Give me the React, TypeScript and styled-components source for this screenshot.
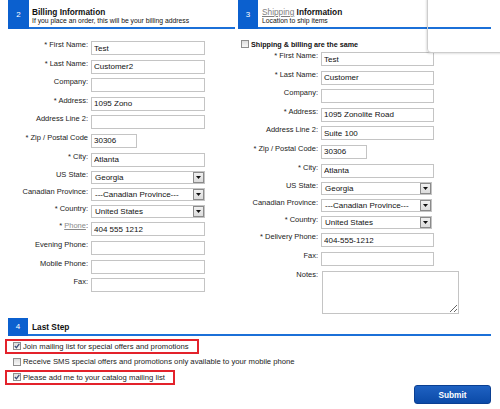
import React from "react";
import styled, { createGlobalStyle } from "styled-components";

const GlobalStyle = createGlobalStyle`
  html, body { margin: 0; padding: 0; background: #fff; }
  body { font-family: "Liberation Sans", Arial, sans-serif; color: #111; }
  * { box-sizing: border-box; }
`;

const BLUE = "#0b60cf";
const LINE = "#1b70d8";

const Page = styled.div`
  position: relative;
  width: 500px;
  height: 409px;
  overflow: hidden;
  padding: 0 9px 0 8px;
`;

const Columns = styled.div`
  display: flex;
  gap: 3px;
  align-items: flex-start;
`;

const Column = styled.section<{ $w: number }>`
  width: ${(p) => p.$w}px;
  flex: none;
`;

const SectionHeader = styled.div<{ $h: number }>`
  display: flex;
  height: ${(p) => p.$h}px;
`;

const StepNum = styled.div<{ $w: number }>`
  width: ${(p) => p.$w}px;
  flex: none;
  background: ${BLUE};
  color: #fff;
  font-size: 8px;
  display: flex;
  align-items: center;
  justify-content: center;
`;

const HeadText = styled.div<{ $pl: number; $pt: number }>`
  flex: 1;
  border-bottom: 2px solid ${LINE};
  padding: ${(p) => p.$pt}px 0 0 ${(p) => p.$pl}px;
`;

const Title = styled.div`
  font-size: 8.3px;
  line-height: 10px;
  font-weight: bold;
  color: #111;
  white-space: nowrap;
`;

const TitleLink = styled.span`
  font-weight: normal;
  color: #7d7d7d;
  text-decoration: underline;
`;

const Subtitle = styled.div`
  font-size: 6.8px;
  line-height: 8px;
  color: #111;
  white-space: nowrap;
`;

const FormGrid = styled.div<{ $mt: number }>`
  display: grid;
  grid-template-columns: 80px 1fr;
  column-gap: 3px;
  row-gap: 4.6px;
  align-items: start;
  margin-top: ${(p) => p.$mt}px;
`;

const Label = styled.label`
  font-size: 7.5px;
  line-height: 8px;
  text-align: right;
  white-space: nowrap;
  color: #222;
`;

const LabelLink = styled.span`
  color: #8a8a8a;
  text-decoration: underline;
`;

const TextInput = styled.input<{ $w: number }>`
  display: block;
  width: ${(p) => p.$w}px;
  height: 14px;
  margin: 0;
  padding: 0 2px;
  border: 1px solid #c4c4c4;
  background: #fff;
  font-family: "Liberation Sans", Arial, sans-serif;
  font-size: 8px;
  color: #111;
  outline: none;
`;

const SelectBox = styled.div<{ $w: number }>`
  display: flex;
  align-items: center;
  width: ${(p) => p.$w}px;
  height: 12.5px;
  border: 1px solid #c4c4c4;
  background: #fff;
  padding-left: 3px;
  font-size: 8px;
  color: #111;
  white-space: nowrap;
`;

const SelectArrow = styled.span`
  margin-left: auto;
  margin-right: 0;
  width: 11px;
  height: 100%;
  flex: none;
  border: 1px solid #8a8a8a;
  background: linear-gradient(#f0f0f0, #dcdcdc);
  display: flex;
  align-items: center;
  justify-content: center;
`;

const Notes = styled.textarea`
  display: block;
  width: 137px;
  height: 43px;
  margin: 0 0 0 1px;
  padding: 2px;
  border: 1px solid #c4c4c4;
  resize: both;
  font-family: "Liberation Sans", Arial, sans-serif;
  font-size: 8px;
  outline: none;
`;

const SameRow = styled.div`
  display: flex;
  align-items: center;
  gap: 2px;
  height: 10px;
  margin-top: 10px;
  padding-left: 3px;
  font-size: 7.2px;
  font-weight: bold;
  color: #111;
  white-space: nowrap;
`;

const Box = styled.span`
  width: 8px;
  height: 8px;
  flex: none;
  border: 1px solid #8e8e8e;
  background: linear-gradient(#dedede, #f8f8f8);
  display: flex;
  align-items: center;
  justify-content: center;
`;

const LastStep = styled.section`
  margin-top: 4px;
`;

const CheckList = styled.div`
  margin: 3px 0 0 -3px;
  display: flex;
  flex-direction: column;
`;

const CheckRow = styled.label<{ $hl?: boolean }>`
  display: flex;
  align-items: center;
  gap: 2px;
  width: fit-content;
  height: 15.5px;
  border: 2px solid ${(p) => (p.$hl ? "#e3222b" : "transparent")};
  padding: 0 8px 0 6px;
  font-size: 7.7px;
  color: #222;
  white-space: nowrap;
`;

const ButtonBar = styled.div`
  display: flex;
  justify-content: flex-end;
`;

const SubmitButton = styled.button`
  width: 77px;
  height: 19px;
  margin: 0;
  padding: 0;
  border: 1px solid #0a3f92;
  border-radius: 3px;
  background: linear-gradient(#1f62c2, #0b4aa8);
  color: #fff;
  font-family: "Liberation Sans", Arial, sans-serif;
  font-size: 8.3px;
  font-weight: bold;
  cursor: pointer;
`;

const Popover = styled.div`
  position: absolute;
  left: 427px;
  top: -4px;
  width: 80px;
  height: 57px;
  border: 1px solid #cdcdcd;
  border-radius: 4px;
  box-shadow: -1px 1px 2px rgba(0, 0, 0, 0.12);
  background: transparent;
  pointer-events: none;
`;

const Arrow = () => (
  <svg width="5" height="3" viewBox="0 0 5 3">
    <path d="M0 0 H5 L2.5 3 Z" fill="#111" />
  </svg>
);

const Check = ({ checked }: { checked?: boolean }) => (
  <Box>
    {checked && (
      <svg width="6" height="6" viewBox="0 0 6 6">
        <path d="M0.8 3 L2.4 4.7 L5.3 0.8" fill="none" stroke="#3a4d78" strokeWidth="1.2" />
      </svg>
    )}
  </Box>
);

type Field =
  | { kind: "input"; label: React.ReactNode; value?: string; w?: number }
  | { kind: "select"; label: React.ReactNode; value: string };

const Select = ({ value, w }: { value: string; w: number }) => (
  <SelectBox $w={w}>
    {value}
    <SelectArrow>
      <Arrow />
    </SelectArrow>
  </SelectBox>
);

const Fields = ({ fields, inputW, selectW }: { fields: Field[]; inputW: number; selectW: number }) => (
  <>
    {fields.map((f, i) => (
      <React.Fragment key={i}>
        <Label>{f.label}</Label>
        {f.kind === "input" ? (
          <TextInput $w={f.w ?? inputW} defaultValue={f.value ?? ""} />
        ) : (
          <Select value={f.value} w={selectW} />
        )}
      </React.Fragment>
    ))}
  </>
);

const billing: Field[] = [
  { kind: "input", label: "* First Name:", value: "Test" },
  { kind: "input", label: "* Last Name:", value: "Customer2" },
  { kind: "input", label: "Company:" },
  { kind: "input", label: "* Address:", value: "1095 Zono" },
  { kind: "input", label: "Address Line 2:" },
  { kind: "input", label: "* Zip / Postal Code", value: "30306", w: 46 },
  { kind: "input", label: "* City:", value: "Atlanta" },
  { kind: "select", label: "US State:", value: "Georgia" },
  { kind: "select", label: "Canadian Province:", value: "---Canadian Province---" },
  { kind: "select", label: "* Country:", value: "United States" },
  {
    kind: "input",
    label: (
      <>
        * <LabelLink>Phone</LabelLink>:
      </>
    ),
    value: "404 555 1212",
  },
  { kind: "input", label: "Evening Phone:" },
  { kind: "input", label: "Mobile Phone:" },
  { kind: "input", label: "Fax:" },
];

const shipping: Field[] = [
  { kind: "input", label: "* First Name:", value: "Test" },
  { kind: "input", label: "* Last Name:", value: "Customer" },
  { kind: "input", label: "Company:" },
  { kind: "input", label: "* Address:", value: "1095 Zonolite Road" },
  { kind: "input", label: "Address Line 2:", value: "Suite 100" },
  { kind: "input", label: "* Zip / Postal Code:", value: "30306", w: 46 },
  { kind: "input", label: "* City:", value: "Atlanta" },
  { kind: "select", label: "US State:", value: "Georgia" },
  { kind: "select", label: "Canadian Province:", value: "---Canadian Province---" },
  { kind: "select", label: "* Country:", value: "United States" },
  { kind: "input", label: "* Delivery Phone:", value: "404-555-1212" },
  { kind: "input", label: "Fax:" },
];

export default function App() {
  return (
    <>
      <GlobalStyle />
      <Page>
        <Columns>
          <Column $w={227}>
            <SectionHeader $h={29}>
              <StepNum $w={21}>2</StepNum>
              <HeadText $pl={3} $pt={7}>
                <Title>Billing Information</Title>
                <Subtitle>If you place an order, this will be your billing address</Subtitle>
              </HeadText>
            </SectionHeader>
            <FormGrid $mt={12}>
              <Fields fields={billing} inputW={114} selectW={114} />
            </FormGrid>
          </Column>
          <Column $w={253}>
            <SectionHeader $h={29}>
              <StepNum $w={20}>3</StepNum>
              <HeadText $pl={4} $pt={7}>
                <Title>
                  <TitleLink>Shipping</TitleLink> Information
                </Title>
                <Subtitle>Location to ship items</Subtitle>
              </HeadText>
            </SectionHeader>
            <SameRow>
              <Check />
              Shipping &amp; billing are the same
            </SameRow>
            <FormGrid $mt={3}>
              <Fields fields={shipping} inputW={113} selectW={111} />
              <Label>Notes:</Label>
              <Notes />
            </FormGrid>
          </Column>
        </Columns>

        <LastStep>
          <SectionHeader $h={18}>
            <StepNum $w={20}>4</StepNum>
            <HeadText $pl={4} $pt={4}>
              <Title>Last Step</Title>
            </HeadText>
          </SectionHeader>
          <CheckList>
            <CheckRow $hl>
              <Check checked />
              Join mailing list for special offers and promotions
            </CheckRow>
            <CheckRow>
              <Check />
              Receive SMS special offers and promotions only available to your mobile phone
            </CheckRow>
            <CheckRow $hl>
              <Check checked />
              Please add me to your catalog mailing list
            </CheckRow>
          </CheckList>
          <ButtonBar>
            <SubmitButton type="button">Submit</SubmitButton>
          </ButtonBar>
        </LastStep>

        <Popover />
      </Page>
    </>
  );
}
